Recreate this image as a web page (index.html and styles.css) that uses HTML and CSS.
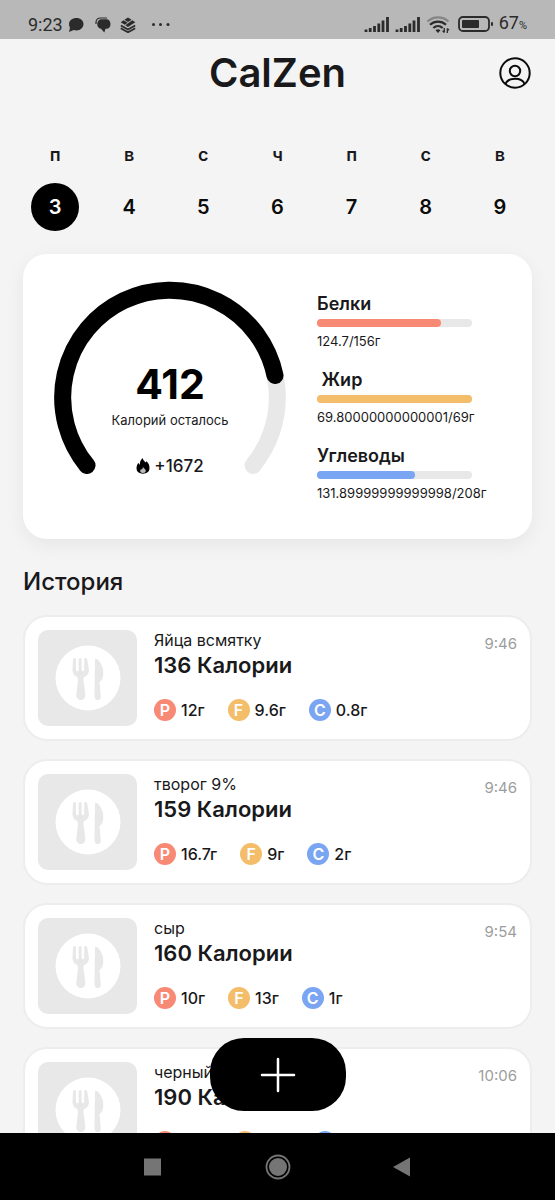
FILE: index.html
```html
<!DOCTYPE html>
<html lang="ru">
<head>
<meta charset="utf-8">
<meta name="viewport" content="width=device-width, initial-scale=1">
<title>CalZen</title>
<link rel="stylesheet" href="styles.css">
</head>
<body>
<svg class="sprite" aria-hidden="true">
  <symbol id="cutlery" viewBox="0 0 66 66">
    <circle cx="33" cy="33" r="32.500" fill="#fff"/>
    <path fill="#e8e8e8" d="M18 14.500a1.500 1.500 0 0 1 3 0V25a1.300 1.300 0 0 0 2.600 0V14.500a1.500 1.500 0 0 1 3 0V25a1.300 1.300 0 0 0 2.600 0V14.500a1.500 1.500 0 0 1 3 0L34 25c0 3.500-1.600 5.500-4.500 7-1 .6-1.300 1.500-1 3l1.800 14.500c.3 3-1.500 5.500-4.500 5.500s-4.800-2.500-4.500-5.500L23 35c.2-1.500-.1-2.400-1-3-2.900-1.500-4.500-3.500-4.500-7z"/>
    <path fill="#e8e8e8" d="M40 15c0-1.300 1.300-1.800 2.400-.8C46 17.500 48.300 22 48.300 28c0 4-1.300 7-3.300 8.800-.5.500-.6 1-.4 1.700l1.200 12.700c.2 2.300-.9 3.800-3 3.800s-3.300-1.500-3.300-3.800z"/>
  </symbol>
  <symbol id="signal" viewBox="0 0 26 17">
    <path stroke="#2b2b2b" stroke-width="2.800" d="M2 16v-2.500M6.200 16v-4M10.500 16v-6M14.800 16V7.500M19 16V4.500M23.500 16V1"/>
  </symbol>
</svg>
<div class="screen">
  <header class="status">
    <div class="status-group">
      <span>9:23</span>
      <svg width="16" height="16" viewBox="0 0 16 16" fill="#2b2b2b"><path d="M8.500 1C12.500 1 15.500 3.600 15.500 7s-3 6.500-7 6.500c-1 0-2-.2-2.800-.5L1 15l1-4.200C1.300 9.700 1 8.500 1 7c0-3.400 3.300-6 7.500-6z"/></svg>
      <svg class="icon-chat" width="16" height="16" viewBox="0 0 16 16"><path d="M1 7V5.500C1 2.600 2.800 1 5.500 1H12" fill="none" stroke="#2b2b2b" stroke-width="1.200"/><path fill="#2b2b2b" d="M6.500 2.200h5C14 2.200 15.500 4.300 15.500 7S14 11.800 11.500 11.800H10.500L9.300 15.500 6 11.800C3.700 11.500 2.200 9.500 2.200 7 2.200 4.300 4 2.200 6.500 2.200z"/></svg>
      <svg class="icon-layers" width="16" height="16" viewBox="0 0 16 16"><path fill="#2b2b2b" d="m8 .5 3.600 2.200L8 4.900 4.400 2.700zM3.700 3.300l4 2.500-3 2-4-2.500zm8.600 0 3 2L8 9.900 5.300 8.200z"/><path d="m.8 8.500 7.200 4 7.200-4M.8 11.300l3 1.700L8 15.300l4.200-2.300 3-1.700" fill="none" stroke="#2b2b2b" stroke-width="1.700"/></svg>
      <svg class="icon-more" width="20" height="16" viewBox="0 0 20 16" fill="#2b2b2b"><circle cx="2.500" cy="7.500" r="1.500"/><circle cx="9.500" cy="7.500" r="1.500"/><circle cx="17" cy="7.500" r="1.500"/></svg>
    </div>
    <div class="status-group">
      <svg width="26" height="17"><use href="#signal"/></svg>
      <svg width="26" height="17"><use href="#signal"/></svg>
      <svg width="24" height="18" viewBox="0 0 24 18" fill="none" stroke="#2b2b2b" stroke-width="2.200"><path stroke="#858585" d="M1.500 5.500c6-5.500 15-5.500 21 0"/><path d="M4 8.700c4.500-4.200 11.500-4.200 16 0M7.300 12c2.700-2.400 6.700-2.400 9.400 0"/><path fill="#2b2b2b" stroke="none" d="M9.500 14.300c1.500-1.400 3.500-1.400 5 0L12 17z"/><path stroke-width="1.300" d="M18.300 12v4.500m-1.700-1.700 1.700 1.700M21.300 17v-4.500m0 0 1.700 1.700"/></svg>
      <svg class="icon-battery" width="36" height="17" viewBox="0 0 36 17"><rect x="1" y="1" width="30" height="14" rx="4" fill="none" stroke="#2b2b2b" stroke-width="1.800"/><rect x="4" y="4" width="17" height="8" rx="1" fill="#2b2b2b"/><rect x="33" y="6" width="2" height="4" rx="1" fill="#2b2b2b"/></svg>
      <span>67<small>%</small></span>
    </div>
  </header>

  <main class="content">
    <div class="title-bar">
      <h1>CalZen</h1>
      <button class="profile" type="button" aria-label="Профиль">
        <svg width="32" height="32" viewBox="0 0 32 32" fill="none" stroke="#0b0b0b" stroke-width="2"><circle cx="16" cy="16" r="14.700"/><circle cx="16" cy="14" r="5.200"/><path d="M6.500 27c1.200-3.500 5-5.200 9.500-5.200s8.300 1.700 9.500 5.200"/></svg>
      </button>
    </div>

    <div class="week">
      <button class="day is-active" type="button"><span>п</span><b>3</b></button>
      <button class="day" type="button"><span>в</span><b>4</b></button>
      <button class="day" type="button"><span>с</span><b>5</b></button>
      <button class="day" type="button"><span>ч</span><b>6</b></button>
      <button class="day" type="button"><span>п</span><b>7</b></button>
      <button class="day" type="button"><span>с</span><b>8</b></button>
      <button class="day" type="button"><span>в</span><b>9</b></button>
    </div>

    <section class="summary">
      <div class="gauge">
        <svg width="232" height="232" viewBox="0 0 232 232" fill="none" stroke-width="17" stroke-linecap="round"><path stroke="#e8e8e8" d="M33 184.500A107.300 107.300 0 1 1 199 184.500"/><path stroke="#000" d="M33 184.500A107.300 107.300 0 1 1 221 94.500"/></svg>
        <div class="gauge-text">
          <strong>412</strong>
          <span class="left">Калорий осталось</span>
          <span class="burned">
            <svg width="14" height="16" viewBox="0 0 14 16"><path fill="#000" d="M6.500 0c.6 2.200 2 3.200 3 4.600l1-1.400C12.500 5 13.500 7.300 13.500 10c0 3.600-2.700 5.700-6.500 5.700S.5 13.600.5 10c0-2.300 1-4 2-5.300.2 1 .6 1.600 1.300 2.100C3.700 4 4.800 1.800 6.500 0z"/><path fill="#bbb" d="M7 9c.6 1.300 2.800 2.200 2.800 4 0 1.300-1.200 2-2.800 2s-2.800-.7-2.800-2c0-.9.400-1.500 1-2l.8.700z"/></svg>
            +1672
          </span>
        </div>
      </div>
      <div class="macros">
        <div class="macro"><h3>Белки</h3><div class="bar"><div class="fill protein" style="width:80%"></div></div><p>124.7/156г</p></div>
        <div class="macro"><h3> Жир</h3><div class="bar"><div class="fill fat" style="width:100%"></div></div><p>69.80000000000001/69г</p></div>
        <div class="macro"><h3>Углеводы</h3><div class="bar"><div class="fill carbs" style="width:63.4%"></div></div><p>131.89999999999998/208г</p></div>
      </div>
    </section>

    <h2>История</h2>
    <div class="history">
      <article class="meal">
        <div class="thumb"><svg width="66" height="66"><use href="#cutlery"/></svg></div>
        <div class="info"><p class="name">Яйца всмятку</p><h3>136 Калории</h3>
          <ul><li><i class="protein">P</i>12г</li><li><i class="fat">F</i>9.6г</li><li><i class="carbs">C</i>0.8г</li></ul></div>
        <time>9:46</time>
      </article>
      <article class="meal">
        <div class="thumb"><svg width="66" height="66"><use href="#cutlery"/></svg></div>
        <div class="info"><p class="name">творог 9%</p><h3>159 Калории</h3>
          <ul><li><i class="protein">P</i>16.7г</li><li><i class="fat">F</i>9г</li><li><i class="carbs">C</i>2г</li></ul></div>
        <time>9:46</time>
      </article>
      <article class="meal">
        <div class="thumb"><svg width="66" height="66"><use href="#cutlery"/></svg></div>
        <div class="info"><p class="name">сыр</p><h3>160 Калории</h3>
          <ul><li><i class="protein">P</i>10г</li><li><i class="fat">F</i>13г</li><li><i class="carbs">C</i>1г</li></ul></div>
        <time>9:54</time>
      </article>
      <article class="meal">
        <div class="thumb"><svg width="66" height="66"><use href="#cutlery"/></svg></div>
        <div class="info"><p class="name">черный</p><h3>190 Калории</h3>
          <ul><li><i class="protein"></i><span class="amount"></span></li><li><i class="fat"></i><span class="amount"></span></li><li><i class="carbs"></i></li></ul></div>
        <time>10:06</time>
      </article>
    </div>
    <button class="add" type="button" aria-label="Добавить"><svg width="36" height="36" viewBox="0 0 36 36" stroke="#fff" stroke-width="2.500" stroke-linecap="round"><path d="M18 2v32M2 18h32"/></svg></button>
  </main>

  <nav class="system-nav">
    <button type="button" aria-label="Недавние"><svg width="26" height="26" viewBox="0 0 26 26"><path fill="#757575" d="M4 4.500h17v17H4z"/></svg></button>
    <button type="button" aria-label="Домой"><svg width="26" height="26" viewBox="0 0 26 26"><circle cx="13" cy="13" r="11.500" fill="none" stroke="#757575" stroke-width="1.800"/><circle cx="13" cy="13" r="9" fill="#757575"/></svg></button>
    <button type="button" aria-label="Назад"><svg width="26" height="26" viewBox="0 0 26 26"><path fill="#757575" d="M3 13 20 3.500v19z"/></svg></button>
  </nav>
</div>
</body>
</html>
```
FILE: styles.css
```css
* { box-sizing: border-box; }

body {
  margin: 0;
  background: #f4f4f4;
  color: #19191b;
  font-family: Inter, "Noto Sans", sans-serif;
}

h1, h2, h3, p, ul { margin: 0; padding: 0; }

button {
  border: 0;
  padding: 0;
  background: none;
  color: inherit;
  font: inherit;
}

svg { display: block; flex: none; }

.sprite { position: absolute; width: 0; height: 0; }

.screen {
  display: flex;
  flex-direction: column;
  height: 100vh;
}

.status {
  display: flex;
  flex: none;
  justify-content: space-between;
  padding: 10px 28px 0;
  height: 39px;
  background: #b8b8b8;
  color: #2b2b2b;
  font: 18px/28px Roboto, sans-serif;
}

.status-group { display: flex; align-items: center; gap: 5px; }
.status small { font-size: 11px; }
.icon-chat { margin-left: 6px; }
.icon-layers { margin-left: 4px; }
.icon-more { margin-left: 10px; }
.icon-battery { margin-left: 3px; }

.content {
  position: relative;
  flex: 1;
  min-height: 0;
  overflow: hidden;
}

.title-bar {
  display: grid;
  grid-template-columns: 1fr auto 1fr;
  align-items: center;
  height: 68px;
  padding: 0 24px;
}

.title-bar h1 {
  grid-column: 2;
  font-size: 40px;
  font-weight: 600;
  line-height: 48px;
}

.profile { justify-self: end; }

.week {
  display: grid;
  grid-template-columns: repeat(7, 1fr);
  padding: 36px 18px 0;
}

.day {
  display: flex;
  flex-direction: column;
  align-items: center;
  gap: 16px;
}

.day span { font-size: 18px; font-weight: 600; line-height: 24px; }

.day b {
  width: 48px;
  border-radius: 50%;
  color: #0b0b0b;
  font-size: 20px;
  font-weight: 600;
  line-height: 48px;
}

.is-active b { background: #000; color: #fff; }

.summary {
  display: flex;
  align-items: center;
  gap: 31px;
  margin: 23px 23px 0;
  padding: 27px 31px 26px;
  border-radius: 24px;
  background: #fff;
  box-shadow: 0 6px 20px rgba(0, 0, 0, 0.06);
}

.gauge { display: grid; flex: none; }
.gauge > * { grid-area: 1 / 1; }

.gauge-text {
  display: flex;
  flex-direction: column;
  align-items: center;
  padding-top: 79px;
}

.gauge strong { color: #000; font-size: 41px; font-weight: 700; line-height: 48px; }
.left { margin-top: 2px; font-size: 13px; line-height: 20px; }

.burned {
  display: flex;
  align-items: center;
  gap: 4px;
  margin-top: 24px;
  font-size: 17px;
  font-weight: 500;
  line-height: 24px;
}

.macros { display: grid; gap: 17px; }
.macro h3 { font-size: 18px; font-weight: 600; line-height: 24px; white-space: pre; }
.macro p { font-size: 13px; line-height: 20px; }

.bar {
  width: 155px;
  height: 8px;
  margin: 3px 0 4px;
  border-radius: 4px;
  background: #e8e8e8;
}

.fill { height: 100%; border-radius: 4px; }
.protein { background: #f88975; }
.fat { background: #f3bd6a; }
.carbs { background: #7aa5f2; }

h2 {
  margin: 27px 23px 17px;
  font-size: 24px;
  font-weight: 500;
  line-height: 32px;
}

.history { display: grid; gap: 18px; padding: 0 23px; }

.meal {
  display: flex;
  gap: 17px;
  padding: 13px;
  border: 2px solid #ededed;
  border-radius: 24px;
  background: #fff;
}

.thumb {
  display: grid;
  flex: none;
  place-items: center;
  width: 99px;
  height: 96px;
  border-radius: 10px;
  background: #e8e8e8;
}

.info { flex: 1; }
.name { font-size: 16px; line-height: 20px; }
.info h3 { font-size: 22px; font-weight: 600; line-height: 30px; }

.meal ul {
  display: flex;
  gap: 23px;
  margin-top: 19px;
  list-style: none;
}

.meal li {
  display: flex;
  align-items: center;
  gap: 5px;
  font-size: 16px;
  font-weight: 500;
  line-height: 22px;
}

.meal i {
  width: 22px;
  height: 22px;
  border-radius: 50%;
  color: #fff;
  font-style: normal;
  font-weight: 600;
  text-align: center;
}

.amount { width: 30px; }

.meal time { color: #9d9d9d; font-size: 15px; line-height: 27px; }

.add {
  position: absolute;
  bottom: 22px;
  left: 50%;
  display: grid;
  place-items: center;
  width: 136px;
  height: 73px;
  margin-left: -68px;
  border-radius: 34px;
  background: #000;
}

.system-nav {
  display: flex;
  flex: none;
  align-items: center;
  justify-content: center;
  gap: 99px;
  height: 67px;
  background: #000;
}
```
